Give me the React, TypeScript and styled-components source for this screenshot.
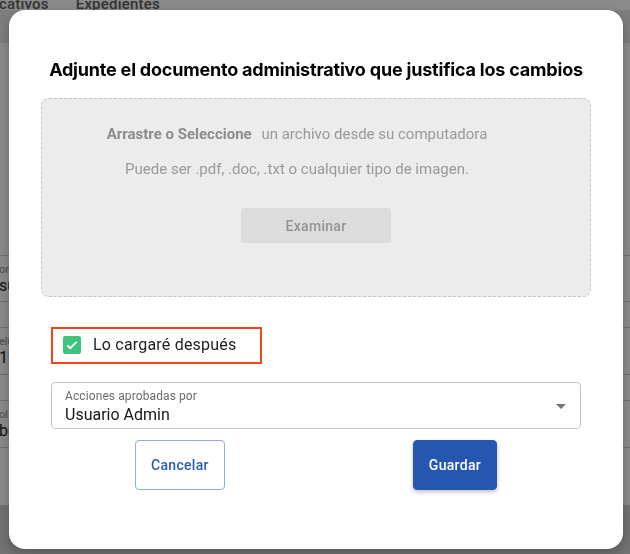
import React from 'react';
import styled, { createGlobalStyle } from 'styled-components';

const Global = createGlobalStyle`
    html, body {
        margin: 0;
        padding: 0;
        width: 630px;
        height: 554px;
        overflow: hidden;
        font-family: Roboto, "Liberation Sans", sans-serif;
    }
`;

const Page = styled.div`
    width: 630px;
    height: 554px;
    background: #d2d2d2;
    display: flex;
    flex-direction: column;
`;

const TabBar = styled.div`
    height: 10px;
    background: #ffffff;
    display: flex;
    gap: 27px;
    overflow: hidden;
    align-items: flex-end;
`;

const Tab = styled.span<{ $offset?: number }>`
    font-size: 15px;
    font-weight: 500;
    line-height: 12px;
    color: #5e5e5e;
    white-space: nowrap;
    letter-spacing: 0.2px;
    margin-left: ${p => p.$offset ?? 0}px;
`;

const Toolbar = styled.div`
    height: 33px;
    background: #e8e8e8;
`;

const Card = styled.div`
    height: 462px;
    background: #ffffff;
    padding-top: 212px;
    box-sizing: border-box;
`;

const Row = styled.div<{ $h: number }>`
    height: ${p => p.$h}px;
    border-top: 1px solid #d0d0d0;
    display: flex;
    flex-direction: column;
    justify-content: center;
    box-sizing: border-box;
    overflow: hidden;
`;

const RowLabel = styled.span`
    font-size: 11px;
    color: #8a8a8a;
    margin-left: -1px;
    white-space: nowrap;
`;

const RowValue = styled.span`
    font-size: 16px;
    color: #222;
    margin-left: -1px;
    white-space: nowrap;
`;

const Overlay = styled.div`
    position: fixed;
    inset: 0;
    background: rgba(0, 0, 0, 0.46);
    padding: 10px 0 0 9px;
    box-sizing: border-box;
`;

const Modal = styled.div`
    width: 614px;
    height: 539px;
    background: #ffffff;
    border-radius: 16px;
    box-shadow: 0 4px 12px rgba(0, 0, 0, 0.25);
    padding: 48px 32px 0;
    box-sizing: border-box;
    display: flex;
    flex-direction: column;
`;

const Title = styled.h2`
    margin: 0;
    font-family: Inter, "Liberation Sans", sans-serif;
    font-size: 18px;
    font-weight: 700;
    line-height: 24px;
    color: #000;
    text-align: center;
    letter-spacing: -0.2px;
`;

const DropZone = styled.div`
    margin-top: 16px;
    height: 199px;
    background: #ececec;
    border: 1px dashed #c6c6c6;
    border-radius: 8px;
    box-sizing: border-box;
    display: flex;
    flex-direction: column;
    align-items: center;
    padding-top: 25px;
    color: #999999;
    font-size: 15px;
`;

const DropLine = styled.p`
    margin: 0 38px 0 0;
    line-height: 20px;
    & + & {
        margin-top: 15px;
    }
`;

const Strong = styled.b`
    font-weight: 700;
    color: #8c8c8c;
    margin-right: 6px;
`;

const BrowseButton = styled.button`
    margin-top: 29px;
    width: 150px;
    height: 35px;
    border: none;
    border-radius: 4px;
    background: #dcdcdc;
    color: #939393;
    font-family: Roboto, sans-serif;
    font-size: 14px;
    font-weight: 500;
    letter-spacing: 0.3px;
`;

const CheckFrame = styled.label`
    margin: 30px 0 0 10px;
    width: 211px;
    height: 37px;
    border: 2px solid #f2431b;
    box-sizing: border-box;
    display: flex;
    align-items: center;
    gap: 12px;
    padding: 0 0 2px 10px;
    font-size: 16px;
    letter-spacing: 0.2px;
    color: #1e1e1e;
`;

const CheckBox = styled.span`
    width: 18px;
    height: 18px;
    border-radius: 2px;
    background: #3ec47d;
    display: flex;
    align-items: center;
    justify-content: center;
`;

const SelectBox = styled.div`
    margin: 18px 10px 0;
    height: 47px;
    border: 1px solid #c4c4c4;
    border-radius: 4px;
    box-sizing: border-box;
    position: relative;
    padding: 6px 13px 0;
    display: flex;
    flex-direction: column;
`;

const SelectLabel = styled.span`
    font-size: 12px;
    line-height: 15px;
    color: #6b6b6b;
    letter-spacing: 0.1px;
`;

const SelectValue = styled.span`
    font-size: 16px;
    line-height: 21px;
    color: #151515;
`;

const Arrow = styled.span`
    position: absolute;
    right: 14px;
    top: 21px;
    width: 0;
    height: 0;
    border-left: 5px solid transparent;
    border-right: 5px solid transparent;
    border-top: 5px solid #757575;
`;

const Actions = styled.div`
    margin-top: 11px;
    display: flex;
    justify-content: space-between;
    padding: 0 94px;
`;

const Button = styled.button<{ $primary?: boolean }>`
    height: 50px;
    padding: 0 15px;
    border-radius: 4px;
    font-family: Roboto, sans-serif;
    font-size: 14px;
    font-weight: 500;
    letter-spacing: 0.3px;
    border: 1px solid ${p => (p.$primary ? '#2556b0' : '#8eaee0')};
    background: ${p => (p.$primary ? '#2556b0' : '#ffffff')};
    color: ${p => (p.$primary ? '#ffffff' : '#2a5bb5')};
    box-shadow: ${p => (p.$primary ? '0 2px 4px rgba(0,0,0,0.25)' : 'none')};
`;

const rows = [
    { h: 46, label: 'on', value: 'su' },
    { h: 26, label: '', value: '' },
    { h: 47, label: 'elu', value: '12' },
    { h: 26, label: '', value: '' },
    { h: 47, label: 'ol', value: 'be' },
];

export default function App() {
    return (
        <>
            <Global />
            <Page>
                <TabBar>
                    <Tab $offset={-1}>cativos</Tab>
                    <Tab>Expedientes</Tab>
                </TabBar>
                <Toolbar />
                <Card>
                    {rows.map((r, i) => (
                        <Row key={i} $h={r.h}>
                            {r.label && <RowLabel>{r.label}</RowLabel>}
                            {r.value && <RowValue>{r.value}</RowValue>}
                        </Row>
                    ))}
                    <Row $h={1} />
                </Card>
            </Page>
            <Overlay>
                <Modal>
                    <Title>Adjunte el documento administrativo que justifica los cambios</Title>
                    <DropZone>
                        <DropLine>
                            <Strong>Arrastre o Seleccione </Strong>un archivo desde su computadora
                        </DropLine>
                        <DropLine>Puede ser .pdf, .doc, .txt o cualquier tipo de imagen.</DropLine>
                        <BrowseButton>Examinar</BrowseButton>
                    </DropZone>
                    <CheckFrame>
                        <CheckBox>
                            <svg width="14" height="14" viewBox="0 0 24 24">
                                <path d="M4 12.5l5 5L20 6.5" fill="none" stroke="#fff" strokeWidth="3" />
                            </svg>
                        </CheckBox>
                        Lo cargaré después
                    </CheckFrame>
                    <SelectBox>
                        <SelectLabel>Acciones aprobadas por</SelectLabel>
                        <SelectValue>Usuario Admin</SelectValue>
                        <Arrow />
                    </SelectBox>
                    <Actions>
                        <Button>Cancelar</Button>
                        <Button $primary>Guardar</Button>
                    </Actions>
                </Modal>
            </Overlay>
        </>
    );
}
